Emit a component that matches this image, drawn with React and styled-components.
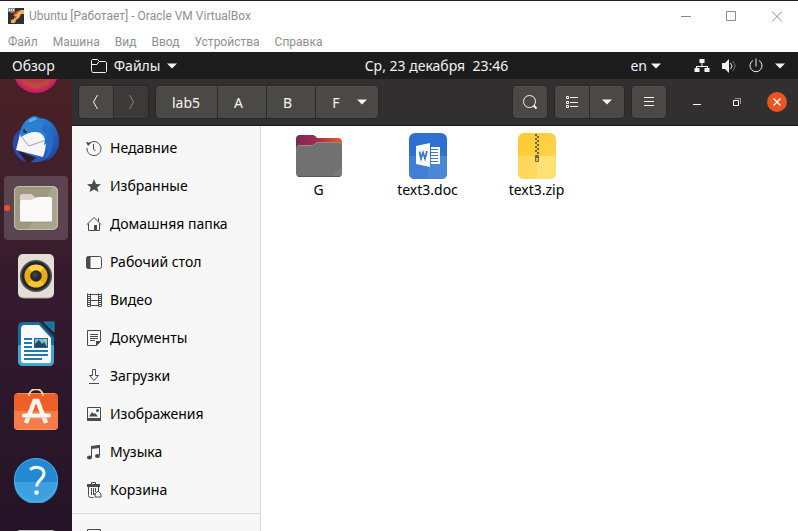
import React from "react";
import styled, { createGlobalStyle } from "styled-components";

const GlobalStyle = createGlobalStyle`
  * { box-sizing: border-box; }
  body { margin: 0; background: #fff; }
  button { font: inherit; color: inherit; border: 0; margin: 0; padding: 0; background: none; cursor: pointer; }
  svg { display: block; flex: none; }
  ul { list-style: none; margin: 0; padding: 0; }
`;

const uiFont = `"Noto Sans", "Open Sans", sans-serif`;

const Frame = styled.div`
  display: flex;
  flex-direction: column;
  height: 100vh;
  overflow: hidden;
  border-top: 1px solid #222024;
  font-family: ${uiFont};
`;

const TitleBar = styled.header`
  display: flex;
  align-items: center;
  flex: none;
  height: 30px;
  padding: 0 16px 0 8px;
  gap: 5px;
  color: #8f8f8f;
  font: 12px/16px Roboto, sans-serif;
`;

const TitleText = styled.h1`
  flex: 1;
  margin: 0;
  font-size: 12px;
  font-weight: 400;
`;

const TitleControls = styled.div`
  display: flex;
  gap: 34px;
`;

const MenuBar = styled.nav`
  display: flex;
  align-items: center;
  flex: none;
  height: 21px;
  padding: 0 8px;
  gap: 15px;
  color: #8f8f8f;
  font: 12px/16px Roboto, sans-serif;
`;

const TopBar = styled.div`
  display: flex;
  align-items: center;
  flex: none;
  height: 27px;
  padding: 0 13px 0 12px;
  background: #1d1d1d;
  color: #f2f2f2;
  font-size: 14px;
  line-height: 20px;
`;

const TopButton = styled.button`
  display: flex;
  align-items: center;
  gap: ${(p) => p.$gap || 0}px;
`;

const TopLeft = styled.div`
  display: flex;
  gap: 36px;
`;

const Clock = styled.time`
  flex: 1;
  padding-left: 65px;
  text-align: center;
  white-space: pre;
`;

const TopRight = styled.div`
  display: flex;
  align-items: center;
  gap: 33px;
`;

const Desktop = styled.div`
  display: flex;
  flex: 1;
  min-height: 0;
`;

const Dock = styled.nav`
  display: flex;
  flex-direction: column;
  align-items: center;
  flex: none;
  width: 72px;
  gap: 4px;
  overflow: hidden;
  background: linear-gradient(#4a2024 0, #40202a 90px, #341a2e 220px, #2b172a 340px, #241326 452px);
`;

const DockItem = styled.button`
  display: flex;
  align-items: ${(p) => (p.$clipped ? "flex-end" : "center")};
  justify-content: center;
  position: relative;
  flex: none;
  width: 64px;
  height: ${(p) => (p.$clipped ? 25 : 64)}px;
  padding-bottom: ${(p) => (p.$clipped ? 10 : 0)}px;
  overflow: hidden;
  border-radius: 4px;
  background: ${(p) => (p.$active ? "#5c4350" : "transparent")};
`;

const RunningDot = styled.span`
  position: absolute;
  left: 0;
  top: 29px;
  width: 6px;
  height: 6px;
  border-radius: 50%;
  background: #e95420;
`;

const FilesWindow = styled.main`
  display: flex;
  flex-direction: column;
  flex: 1;
  min-width: 0;
`;

const HeaderBar = styled.div`
  display: flex;
  align-items: center;
  flex: none;
  height: 47px;
  padding: 0 11px 0 7px;
  gap: 8px;
  background: #322f30;
  border-bottom: 1px solid #1c191b;
  color: #f5f4f2;
  font-size: 14px;
`;

const ButtonGroup = styled.div`
  display: flex;
  gap: 1px;
  border-radius: 4px;
  overflow: hidden;
  background: #2b2929;
  box-shadow: 0 0 0 1px #292727;
`;

const HeaderButton = styled.button`
  display: flex;
  align-items: center;
  justify-content: center;
  width: 34px;
  height: 32px;
  background: ${(p) => (p.disabled ? "#3b3a39" : "#4a4946")};
  box-shadow: inset 0 1px ${(p) => (p.disabled ? "#403f3e" : "#51504d")};
`;

const PathButton = styled(HeaderButton)`
  justify-content: flex-start;
  width: auto;
  gap: 18px;
  padding: 0 ${(p) => (p.$current ? 11 : 23)}px 0 16px;
`;

const FirstPathButton = styled(PathButton)`
  padding: 0 17px 0 16px;
`;

const Spacer = styled.div`
  flex: 1;
`;

const WindowControls = styled.div`
  display: flex;
  align-items: center;
  gap: 20px;
  margin-left: 13px;
`;

const Body = styled.div`
  display: flex;
  flex: 1;
  min-height: 0;
`;

const Sidebar = styled.nav`
  flex: none;
  width: 189px;
  padding-top: 3px;
  overflow: hidden;
  background: #f7f7f7;
  border-right: 1px solid #d6d6d6;
`;

const Place = styled.button`
  display: flex;
  align-items: center;
  width: 100%;
  height: 38px;
  padding-left: 14px;
  gap: 8px;
  color: #000;
  font-size: 14px;
  line-height: 20px;
`;

const Divider = styled.hr`
  height: 1px;
  margin: 4px 0;
  border: 0;
  background: #dadada;
`;

const FileGrid = styled.ul`
  display: grid;
  grid-template-columns: repeat(auto-fill, 109px);
  align-content: start;
  flex: 1;
  padding: 6px 3px;
  background: #fff;
`;

const FileItem = styled.button`
  display: flex;
  flex-direction: column;
  align-items: center;
  width: 100%;
  color: #000;
  font-size: 14px;
  line-height: 20px;
`;

const Caret = () => (
  <svg width="10" height="6" viewBox="0 0 10 6"><path d="M0 .5h10L5 5.5z" fill="#f5f5f5" /></svg>
);

const Line = ({ size = 16, color = "#4a4a4a", children }) => (
  <svg width={size} height={size} viewBox="0 0 16 16" fill="none" stroke={color}>{children}</svg>
);

const VBoxIcon = () => (
  <svg width="16" height="16" viewBox="0 0 16 16">
    <path d="M0 0h16v16H0z" fill="#2b2e3d" />
    <path d="M0 0h7v4H0z" fill="#8c8c94" />
    <path d="M1 1h1v2H1zM3 1h1v2H3zM5 1h1v2H5z" fill="#eee" />
    <path d="M10 4l3-2h3v4h-3l-2 4-3 2-1 3H3v-3l3-1 1-3-2-1 3-1z" fill="#f6b14a" />
    <path d="M2 5h3l3 2 2-3 2-2-3 1-2 2-2-1H2zM7 8l2 1-2 2z" fill="#df4b1d" />
  </svg>
);

const ThunderbirdIcon = () => (
  <svg width="48" height="48" viewBox="0 0 48 48">
    <defs>
      <linearGradient id="bird" x2="1" y2="1"><stop stopColor="#2798df" /><stop offset=".5" stopColor="#2472c9" /><stop offset="1" stopColor="#263b9c" /></linearGradient>
    </defs>
    <path d="M22 0c3 0 4 1 5 2 11 0 19 9 20 21 1 10-5 19-13 22l3-4c-6 5-14 6-18 5l5-4-18-8L3 23l6-9c1-6 6-12 13-14z" fill="url(#bird)" />
    <path d="M9 13C1 18-1 28 2 34c2 6 7 11 13 12-5-4-6-9-6-12L7 21z" fill="#294aa9" />
    <path d="M6 35l18 7-5 3-4 1z" fill="#33182a" />
    <path d="M8 18l10-3c7-2 13 0 16 5 0 6 0 14-3 21L4 34z" fill="#f6f6fa" />
    <path d="M8 19l9 11 17-6" fill="none" stroke="#9fa2b1" />
    <path d="M14 7c-5 3-7 8-5 14 5-3 9-5 14-5 6 0 9 3 10 8l2 9c5-11 2-20-5-26-4-4-11-4-16 0z" fill="#2b7fce" />
    <path d="M32 8c7 5 10 13 9 20-1 8-5 13-9 17l4-12-3 3 2-9-3 2 2-9-4-7z" fill="#286cca" />
    <path d="M16 6c3-5 7-5 9-3l-6 3z" fill="#5ab7e7" />
    <circle cx="13" cy="15" r="2" fill="#1b2b54" /><circle cx="14" cy="14" r=".8" fill="#ddc765" />
  </svg>
);

const FilesIcon = () => (
  <svg width="46" height="46" viewBox="0 0 46 46">
    <rect x="1" y="1" width="44" height="44" rx="5" fill="#aba48f" />
    <path d="M1 40V6q0-5 5-5h34L15 45H6q-5 0-5-5" fill="#969078" opacity=".6" />
    <rect x="1.5" y="1.5" width="43" height="43" rx="5" fill="none" stroke="#c5bfae" />
    <path d="M7 11q0-2 2-2h9l4 3v10H7z" fill="#d7d3c8" />
    <path d="M7 17q0-2 2-2h10l5-3h13q2 0 2 2v21q0 2-2 2H9q-2 0-2-2z" fill="#faf9f7" />
    <path d="M8 37h30" stroke="#827c69" opacity=".6" />
  </svg>
);

const RhythmboxIcon = () => (
  <svg width="38" height="46" viewBox="0 0 38 46">
    <rect x="1" y="1" width="36" height="44" rx="5" fill="#e3dfd5" />
    <path d="M2 43q2 2 5 2h24q3 0 5-2" fill="none" stroke="#a7a296" />
    <circle cx="19" cy="23" r="16" fill="#4c4c56" /><circle cx="19" cy="23" r="14.2" fill="#22232d" />
    <circle cx="19" cy="23" r="11.6" fill="#e7ad12" />
    <path d="M19 23l-8-8a11.5 11.5 0 0 1 16 0z" fill="#ffd345" />
    <path d="M19 23l-8 8a11.5 11.5 0 0 0 16 0z" fill="#f7c52d" />
    <circle cx="19" cy="23" r="5.8" fill="#292a2b" /><circle cx="18" cy="22" r="2.8" fill="#3c3e3f" />
  </svg>
);

const WriterIcon = () => (
  <svg width="38" height="46" viewBox="0 0 38 46">
    <path d="M6 1h17l14 15v24q0 5-5 5H6q-5 0-5-5V6q0-5 5-5" fill="#166fa3" />
    <path d="M1 24h36v16q0 5-5 5H6q-5 0-5-5z" fill="#45a4d7" />
    <path d="M8 4h14l12 13v23q0 2-2 2H7q-3 0-3-3V8q0-4 4-4" fill="#faf9fa" />
    <path d="M23 1l14 15" stroke="#15455f" strokeWidth="2" />
    <path d="M27 1h10v10z" fill="#16719f" stroke="#2584b4" />
    <path d="M7 18h8M7 22h8M7 26h8M7 30h24M7 34h24M7 38h18" stroke="#2378a8" strokeWidth="2" />
    <path d="M17 17h14v10H17z" fill="#1d6b98" /><path d="M18 18h12v8H18z" fill="#67bde8" />
    <path d="M18 26v-3l4-4 3 4 2-2 3 5z" fill="#2c4350" /><path d="M26 18h4v4z" fill="#f1c232" />
  </svg>
);

const SoftwareIcon = () => (
  <svg width="46" height="46" viewBox="0 4 46 46">
    <rect x="1" y="8" width="44" height="37" rx="4" fill="#ee6027" />
    <path d="M1 26h44v15q0 4-4 4H5q-4 0-4-4z" fill="#f57b49" />
    <path d="M4 8.5h38M4 44.5h38" stroke="#f9a178" opacity=".7" />
    <path d="M16 11c0-9 14-9 14 0" fill="none" stroke="#f2d6a4" strokeWidth="2" />
    <path d="M13 38l8.5-22h3L33 38" fill="none" stroke="#fff4ed" strokeWidth="4.5" />
    <path d="M11 30.5h25" stroke="#fff8f3" strokeWidth="4" strokeLinecap="round" />
    <path d="M12 32.8h23" stroke="#d5cec9" />
  </svg>
);

const HelpIcon = () => (
  <svg width="46" height="46" viewBox="0 0 46 46">
    <circle cx="23" cy="23" r="22" fill="#2389d4" />
    <path d="M1 25h44a22 22 0 0 1-44 0" fill="#3da0e0" />
    <circle cx="23" cy="23" r="21.5" fill="none" stroke="#62b8ed" opacity=".7" />
    <path d="M17 12.5c6-4 14-2 14 4 0 6-8 7-7 13" fill="none" stroke="#fff" strokeWidth="3" />
    <circle cx="23.5" cy="35.5" r="2.3" fill="#fff" />
  </svg>
);

const FirefoxEdge = () => (
  <svg width="48" height="48" viewBox="0 0 48 48">
    <circle cx="24" cy="24" r="23" fill="#c91f69" /><circle cx="24" cy="22" r="22" fill="#c6334d" />
    <path d="M8 30q16 14 32 0l-5 9q-11 7-22 0z" fill="#bd483d" />
  </svg>
);

const DriveIcon = () => (
  <svg width="40" height="36" viewBox="0 0 40 36"><rect width="40" height="36" rx="4" fill="#919387" /><path d="M3 .5h34" stroke="#bbbcae" /></svg>
);

const placeIcons = {
  recent: <Line><path d="M2.5 4.2A7 7 0 1 1 1 8M7.5 4v5l2 2" /><path d="M0 2l5 1-3 3z" fill="#4a4a4a" stroke="none" /></Line>,
  star: <Line><path d="M8 1l2 5 5 .3-3.8 3.2 1.3 4.5L8 11.6 3.5 14l1.3-4.5L1 6.3 6 6z" fill="#4a4a4a" stroke="none" /></Line>,
  home: <Line><path d="M.7 8.7L8 1.5l7.3 7.2M2.5 7.5v7h11v-7M12.5 2v3.5" /><path d="M8 9h3v5H8z" fill="#4a4a4a" stroke="none" /></Line>,
  desktop: <Line><rect x=".5" y="2.5" width="15" height="12" rx="2" /><path d="M1 3h3v11H1z" fill="#4a4a4a" /></Line>,
  video: <Line><path d="M1.5 1.5v13M4.5 1.5v13M12.5 1.5v13M15.5 1.5v13M4 2.5h9M4 8.5h9M4 13.5h9" /><path d="M3 2v13M14 2v13" strokeWidth="2" strokeDasharray="1 1" /></Line>,
  document: <Line><path d="M1.5 .5h13v11l-4 4h-9zM4 4.5h8M4 6.5h8M4 8.5h8M4 10.5h5" /><path d="M10 16v-5h5z" fill="#4a4a4a" stroke="none" /></Line>,
  download: <Line><path d="M6.5 1.5h3v6h3L8 12.5l-4.5-5h3zM3 15.5h10" /></Line>,
  image: <Line><path d="M1.5 1.5h13v12h-13z" /><path d="M1 12h14v3H1zM3 10.5L6 6l2 2 1-1 3 3.5z" fill="#4a4a4a" stroke="none" /><circle cx="11.5" cy="4.5" r="1.5" fill="#4a4a4a" stroke="none" /></Line>,
  music: <Line><path d="M5.5 13V3l8-1.5V11" /><path d="M5 2l9-1v3L5 5z" fill="#4a4a4a" stroke="none" /><ellipse cx="3.5" cy="13.5" rx="2.5" ry="2" fill="#4a4a4a" stroke="none" /><ellipse cx="11.5" cy="12" rx="2.5" ry="2" fill="#4a4a4a" stroke="none" /></Line>,
  trash: <Line><path d="M5.5 2V.5h4V2M2.5 5v8.5q0 2 2 2h3M5.5 6v7M7.5 6v7M9.5 6v4M12.5 5v4" /><path d="M1 2h13v3H1z" fill="#4a4a4a" stroke="none" /><path d="M9 12l3-3 3 3M15 12v3H9v-3M8 12h2" /></Line>,
  other: <Line><path d="M1.5 15V.5h13V15" /></Line>,
};

const places = [
  ["recent", "Недавние"], ["star", "Избранные"], ["home", "Домашняя папка"],
  ["desktop", "Рабочий стол"], ["video", "Видео"], ["document", "Документы"],
  ["download", "Загрузки"], ["image", "Изображения"], ["music", "Музыка"], ["trash", "Корзина"],
];

const FolderIcon = () => (
  <svg width="48" height="48" viewBox="0 0 48 48">
    <defs><linearGradient id="tab"><stop stopColor="#7d2857" /><stop offset=".45" stopColor="#a22b4b" /><stop offset="1" stopColor="#eb5b29" /></linearGradient></defs>
    <path d="M1 7q0-4 4-4h13q2 0 4 3h21q4 0 4 4v12H1z" fill="url(#tab)" />
    <path d="M1 17q0-4 4-4h13l4-3h21q4 0 4 4v27q0 4-4 4H5q-4 0-4-4z" fill="#717171" />
    <path d="M2 14.5q1-1 3-1h13l4-3h21q3 0 4 2" fill="none" stroke="#9a8b87" />
    <path d="M47 34v7q0 4-4 4h-7z" fill="#7a7a7a" /><path d="M3 44.5h42" fill="none" stroke="#585858" />
  </svg>
);

const DocIcon = () => (
  <svg width="48" height="48" viewBox="0 0 48 48">
    <rect x="5" y="1" width="38" height="46" rx="6" fill="#2e70d2" />
    <path d="M5 24h38v17q0 6-6 6H11q-6 0-6-6z" fill="#427ed4" /><path d="M24 24h19v17q0 6-6 6H24z" fill="#4c86d9" />
    <path d="M12 14l14-3v24l-14-3zM27 15h9v17h-9z" fill="#fff" />
    <path d="M27 17.5h7M27 20.5h7M27 23.5h7M27 26.5h7M27 29.5h7" stroke="#4178c6" />
    <path d="M15.5 19.5l1.5 7 2-6 2 6 2-7.5" fill="none" stroke="#3978d0" strokeWidth="1.8" />
  </svg>
);

const ZipIcon = () => (
  <svg width="48" height="48" viewBox="0 0 48 48">
    <defs><linearGradient id="zip" x2="1" y2="1"><stop stopColor="#fdc92d" /><stop offset="1" stopColor="#fbd85a" /></linearGradient></defs>
    <rect x="5" y="1" width="38" height="46" rx="6" fill="url(#zip)" />
    <path d="M5 24h38v17q0 6-6 6H11q-6 0-6-6z" fill="#fcdd68" opacity=".7" /><path d="M24 24h19v17q0 6-6 6H24z" fill="#ffe885" opacity=".5" />
    <path d="M23 2v20" stroke="#75643c" strokeWidth="2" strokeDasharray="2 2" /><path d="M25 4v18" stroke="#75643c" strokeWidth="2" strokeDasharray="2 2" />
    <path d="M22.5 23.5h3v6h-3z" fill="#e5c258" stroke="#75643c" /><path d="M23 24h2v2h-2z" fill="#75643c" />
  </svg>
);

export default function App() {
  return (
    <Frame>
      <GlobalStyle />
      <TitleBar>
        <VBoxIcon />
        <TitleText>Ubuntu [Работает] - Oracle VM VirtualBox</TitleText>
        <TitleControls>
          <button aria-label="Свернуть"><svg width="11" height="11" viewBox="0 0 11 11"><path d="M0 5.5h10" stroke="#8c8c8c" /></svg></button>
          <button aria-label="Развернуть"><svg width="11" height="11" viewBox="0 0 11 11"><path d="M.5.5h9v9H.5z" fill="none" stroke="#8c8c8c" /></svg></button>
          <button aria-label="Закрыть"><svg width="11" height="11" viewBox="0 0 11 11"><path d="M1 .5l10 10M11 .5L1 10.5" stroke="#8c8c8c" /></svg></button>
        </TitleControls>
      </TitleBar>
      <MenuBar>
        {["Файл", "Машина", "Вид", "Ввод", "Устройства", "Справка"].map((t) => <button key={t}>{t}</button>)}
      </MenuBar>
      <TopBar>
        <TopLeft>
          <TopButton>Обзор</TopButton>
          <TopButton $gap={7}>
            <Line color="#f2f2f2"><path d="M.5 12.5v-10l1-1h5l2 2h6l1 1v9l-1 1h-13zM1 6.5h5l2-3" /></Line>
            Файлы <Caret />
          </TopButton>
        </TopLeft>
        <Clock>{"Ср, 23 декабря  23:46"}</Clock>
        <TopRight>
          <TopButton $gap={4}>en <Caret /></TopButton>
          <TopButton $gap={11} aria-label="Системное меню">
            <Line color="none"><path d="M5.5 1h5v4h-2v3H14v2h1.500v4h-5v-4H13V9H3v1h2.500v4h-5v-4H2V8h5.500V5h-2z" fill="#f2f2f2" /></Line>
            <Line color="#f2f2f2"><path d="M1 5h3l4-4v14l-4-4H1z" fill="#f2f2f2" stroke="none" /><path d="M9.5 5q3 3 0 6" /><path d="M11.5 3q5 5 0 10" stroke="#777" /></Line>
            <Line color="#f2f2f2"><path d="M5 2.5A6 6 0 1 0 11 2.5M8 .5v8" /></Line>
            <Caret />
          </TopButton>
        </TopRight>
      </TopBar>
      <Desktop>
        <Dock aria-label="Приложения">
          <DockItem $clipped aria-label="Firefox"><FirefoxEdge /></DockItem>
          <DockItem aria-label="Thunderbird"><ThunderbirdIcon /></DockItem>
          <DockItem $active aria-label="Файлы"><RunningDot /><FilesIcon /></DockItem>
          <DockItem aria-label="Rhythmbox"><RhythmboxIcon /></DockItem>
          <DockItem aria-label="LibreOffice Writer"><WriterIcon /></DockItem>
          <DockItem aria-label="Ubuntu Software"><SoftwareIcon /></DockItem>
          <DockItem aria-label="Справка"><HelpIcon /></DockItem>
          <DockItem aria-label="Диск"><DriveIcon /></DockItem>
        </Dock>
        <FilesWindow>
          <HeaderBar>
            <ButtonGroup>
              <HeaderButton aria-label="Назад"><Line color="#f5f5f5"><path d="M9.5 1L5.5 8l4 7" /></Line></HeaderButton>
              <HeaderButton disabled aria-label="Вперёд"><Line color="#8a8988"><path d="M6.5 1l4 7-4 7" /></Line></HeaderButton>
            </ButtonGroup>
            <ButtonGroup>
              <FirstPathButton>lab5</FirstPathButton>
              <PathButton>A</PathButton>
              <PathButton>B</PathButton>
              <PathButton $current>F <Caret /></PathButton>
            </ButtonGroup>
            <Spacer />
            <ButtonGroup>
              <HeaderButton aria-label="Поиск"><Line color="#f5f5f5"><circle cx="7.5" cy="7.5" r="6" /><path d="M11.5 11.5l3 3" strokeWidth="2" /></Line></HeaderButton>
            </ButtonGroup>
            <ButtonGroup>
              <HeaderButton aria-label="Список"><Line color="#f5f5f5"><path d="M2.5 2.5h2v2h-2zM2.5 7.5h2v2h-2zM2.5 11.5h2v2h-2zM6 3.5h8M6 8.5h8M6 12.5h8" /></Line></HeaderButton>
              <HeaderButton aria-label="Параметры вида"><Caret /></HeaderButton>
            </ButtonGroup>
            <ButtonGroup>
              <HeaderButton aria-label="Меню"><Line color="#f5f5f5"><path d="M3 3.5h10M3 7.5h10M3 11.5h10" /></Line></HeaderButton>
            </ButtonGroup>
            <WindowControls>
              <button aria-label="Свернуть окно"><svg width="20" height="20" viewBox="0 0 20 20"><path d="M6 12.5h8" stroke="#fff" /></svg></button>
              <button aria-label="Восстановить окно"><svg width="20" height="20" viewBox="0 0 20 20" fill="none"><path d="M8 6.5h5.5V12" stroke="#999" /><path d="M6.5 8.5h5v5h-5z" stroke="#fff" /></svg></button>
              <button aria-label="Закрыть окно"><svg width="20" height="20" viewBox="0 0 20 20"><circle cx="10" cy="10" r="10" fill="#e95420" /><path d="M6.5 6.5l7 7M13.5 6.5l-7 7" stroke="#fff" strokeWidth="1.4" /></svg></button>
            </WindowControls>
          </HeaderBar>
          <Body>
            <Sidebar aria-label="Места">
              {places.map(([icon, label]) => <Place key={icon}>{placeIcons[icon]}{label}</Place>)}
              <Divider />
              <Place aria-label="Другие места">{placeIcons.other}</Place>
            </Sidebar>
            <FileGrid>
              <li><FileItem><FolderIcon />G</FileItem></li>
              <li><FileItem><DocIcon />text3.doc</FileItem></li>
              <li><FileItem><ZipIcon />text3.zip</FileItem></li>
            </FileGrid>
          </Body>
        </FilesWindow>
      </Desktop>
    </Frame>
  );
}
